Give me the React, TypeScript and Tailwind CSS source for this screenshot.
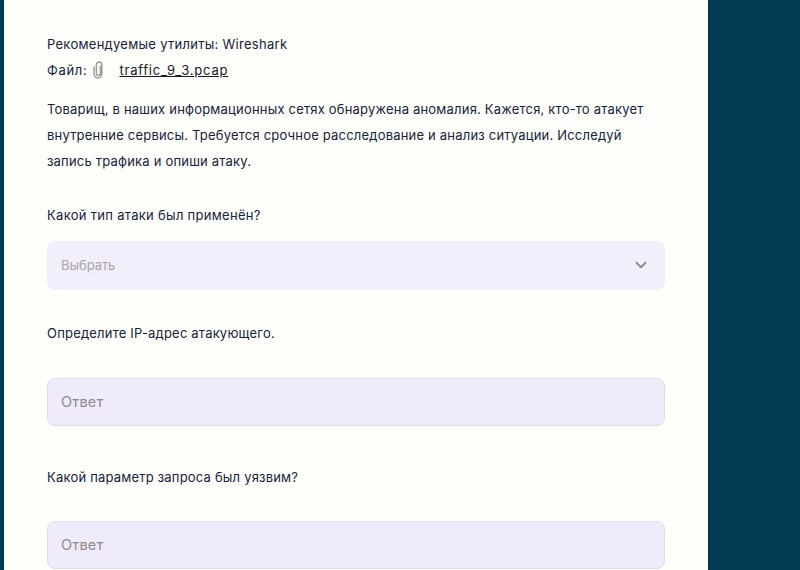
import { ChevronDown } from "lucide-react";

const AnswerInput = () => (
  <input
    placeholder="Ответ"
    className="block w-full h-[48px] pl-[13px] pr-[13px] pb-[2px] bg-[#f0ebfa] border border-[#dfdcee] rounded-lg text-[14.5px] font-normal text-[#1d2b3a] outline-none placeholder:text-[#8f8a8c]"
  />
);

const App = () => {
  return (
    <div className="h-[570px] overflow-hidden bg-[#033a54] pl-1 font-['Inter',sans-serif] text-[13px] leading-[26px] tracking-[0.2px] text-[#16233a]">
      <div className="w-[704px] h-full bg-[#fefefa] pt-[31px] px-[43px]">
        <p className="tracking-[0.28px]">Рекомендуемые утилиты: Wireshark</p>
        <p className="flex items-center">
          <span className="tracking-[0.7px]">Файл:</span>
          <svg
            width="11"
            height="18"
            viewBox="0 0 11 18"
            fill="none"
            stroke="#9c9c9c"
            strokeWidth="1.5"
            className="ml-[6px]"
          >
            <path d="M7.4 5V12.6a2 2 0 0 1-4 0V3.8a2.7 2.7 0 0 1 5.4 0V13a3.9 3.9 0 0 1-7.8 0V5.5" />
          </svg>
          <a href="#" className="ml-[15px] underline tracking-[0.76px] text-[#141c28]">
            traffic_9_3.pcap
          </a>
        </p>

        <p className="mt-[13px]">
          Товарищ, в наших информационных сетях обнаружена аномалия. Кажется, кто-то атакует
          внутренние сервисы. Требуется срочное расследование и анализ ситуации. Исследуй запись
          трафика и опиши атаку.
        </p>

        <p className="mt-[28px] tracking-[0.3px]">Какой тип атаки был применён?</p>
        <div className="mt-[13px] h-[49px] pl-[14px] pr-[15px] pb-[1px] flex items-center justify-between bg-[#f3eefc] rounded-lg">
          <span className="tracking-[-0.05px] text-[#a9a5a8]">Выбрать</span>
          <ChevronDown size={18} strokeWidth={2.5} className="text-[#8b8b92]" />
        </div>

        <p className="mt-[30px]">Определите IP-адрес атакующего.</p>
        <div className="mt-[32px]">
          <AnswerInput />
        </div>

        <p className="mt-[38px]">Какой параметр запроса был уязвим?</p>
        <div className="mt-[31px]">
          <AnswerInput />
        </div>
      </div>
    </div>
  );
};

export default App;
